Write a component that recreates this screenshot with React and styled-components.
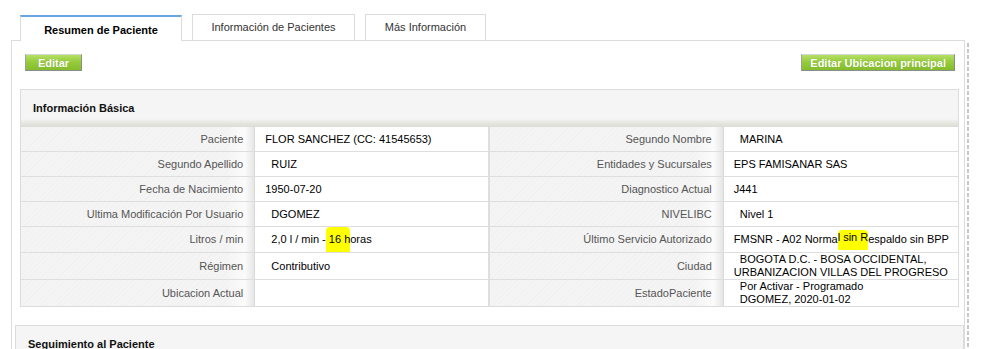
import styled, { createGlobalStyle } from "styled-components";

const GlobalStyle = createGlobalStyle`
  html, body {
    margin: 0;
    padding: 0;
    background: #fff;
  }
  body {
    font-family: "Liberation Sans", Arial, sans-serif;
    font-size: 11px;
    color: #000;
    overflow: hidden;
  }
`;

const Page = styled.div`
  padding: 14px 0 0 11px;
  display: flex;
  align-items: stretch;
`;

const Main = styled.div`
  width: 954px;
  display: flex;
  flex-direction: column;
`;

const Splitter = styled.div`
  width: 2px;
  margin: 29px 0 0 2px;
  background: repeating-linear-gradient(to bottom, #c6c6c6 0 4px, transparent 4px 6px);
`;

const Tabs = styled.div`
  display: flex;
  align-items: flex-end;
  gap: 10px;
  padding-left: 9px;
`;

const Tab = styled.div`
  position: relative;
  z-index: 1;
  box-sizing: border-box;
  width: ${(p) => p.$width}px;
  height: 26px;
  background: #fff;
  border: 1px solid #dcdcdc;
  border-bottom: none;
  text-align: center;
  line-height: 25px;
  color: #333;
  font-weight: ${(p) => (p.$active ? "bold" : "normal")};
  ${(p) =>
    p.$active &&
    `
    border-top: 2px solid #68a6e4;
    margin-bottom: -1px;
    line-height: 26px;
    color: #000;
  `}
`;

const Panel = styled.div`
  border: 1px solid #dcdcdc;
  padding: 13px 0 20px;
  min-height: 330px;
`;

const Toolbar = styled.div`
  display: flex;
  justify-content: space-between;
  padding: 0 9px 0 13px;
  margin-bottom: 18px;
`;

const Button = styled.button`
  box-sizing: border-box;
  height: 17px;
  min-width: 57px;
  padding: 0 8px;
  font-family: "Liberation Sans", Arial, sans-serif;
  font-size: 11px;
  font-weight: bold;
  color: #fff;
  text-shadow: 0 0 1px rgba(60, 100, 0, 0.35);
  background: linear-gradient(to bottom, #b4e065 0%, #97cc3d 45%, #84bd2c 100%);
  border: 1px solid;
  border-color: #d6d6d6 #8c8c8c #8c8c8c #a0a0a0;
  border-radius: 0;
  line-height: 14px;
  cursor: pointer;
`;

const Box = styled.div`
  margin: ${(p) => p.$margin};
  border: 1px solid #dcdcdc;
`;

const BoxHeader = styled.div`
  height: 37px;
  box-sizing: border-box;
  padding: 12px 0 0 12px;
  font-weight: bold;
  color: #111;
  background: linear-gradient(
    to bottom,
    #f5f5f5 0,
    #f5f5f5 29px,
    #ececE8 31px,
    #dcdcd5 37px
  );
`;

const Grid = styled.div`
  display: grid;
  grid-template-columns: 1fr 1fr 1fr 1fr;
`;

const Label = styled.div`
  display: flex;
  align-items: center;
  justify-content: flex-end;
  min-height: 24px;
  padding: 0 11px 0 8px;
  color: #555;
  line-height: 13px;
  text-align: right;
  border-bottom: ${(p) => (p.$last ? "none" : "1px solid #dedede")};
  border-right: 1px solid #d9d9d9;
  background:
    linear-gradient(to right, rgba(255, 255, 255, 0) 88%, rgba(255, 255, 255, 0.7) 96%, #e6e6e6 100%),
    repeating-linear-gradient(135deg, #f4f4f4 0 3px, #f1f1f1 3px 4px);
`;

const Value = styled.div`
  display: flex;
  align-items: center;
  min-height: 24px;
  padding: 0 8px 0 10px;
  line-height: 13px;
  background: #fff;
  white-space: pre;
  border-bottom: ${(p) => (p.$last ? "none" : "1px solid #dedede")};
  border-right: ${(p) => (p.$split ? "2px solid #dedede" : "none")};
`;

const Mark = styled.span`
  background: #ffff00;
  padding: ${(p) => p.$top}px 0 6px;
  border-radius: 4px 4px 0 0;
`;

const rows = [
  ["Paciente", "FLOR SANCHEZ (CC: 41545653)", "Segundo Nombre", "  MARINA"],
  ["Segundo Apellido", "  RUIZ", "Entidades y Sucursales", "EPS FAMISANAR SAS"],
  ["Fecha de Nacimiento", "1950-07-20", "Diagnostico Actual", "J441"],
  ["Ultima Modificación Por Usuario", "  DGOMEZ", "NIVELIBC", "  Nivel 1"],
  [
    "Litros / min",
    <>
      {"  2,0 l / min -"}
      <Mark $top={6}> 16 h</Mark>
      oras
    </>,
    "Último Servicio Autorizado",
    <>
      {"FMSNR - A02 Norma"}
      <Mark $top={1}>l sin R</Mark>
      espaldo sin BPP
    </>,
  ],
  [
    "Régimen",
    "  Contributivo",
    "Ciudad",
    <span>
      {"  BOGOTA D.C. - BOSA OCCIDENTAL,"}
      <br />
      URBANIZACION VILLAS DEL PROGRESO
    </span>,
  ],
  [
    "Ubicacion Actual",
    "",
    "EstadoPaciente",
    <span>
      {"  Por Activar - Programado"}
      <br />
      {"  DGOMEZ, 2020-01-02"}
    </span>,
  ],
];

export default function App() {
  return (
    <>
      <GlobalStyle />
      <Page>
        <Main>
          <Tabs>
            <Tab $active $width={162}>Resumen de Paciente</Tab>
            <Tab $width={163}>Información de Pacientes</Tab>
            <Tab $width={121}>Más Información</Tab>
          </Tabs>
          <Panel>
            <Toolbar>
              <Button>Editar</Button>
              <Button>Editar Ubicacion principal</Button>
            </Toolbar>
            <Box $margin="0 5px 0 8px">
              <BoxHeader>Información Básica</BoxHeader>
              <Grid>
                {rows.map(([l1, v1, l2, v2], i) => {
                  const last = i === rows.length - 1;
                  return [
                    <Label key={`a${i}`} $last={last}>{l1}</Label>,
                    <Value key={`b${i}`} $last={last} $split>{v1}</Value>,
                    <Label key={`c${i}`} $last={last}>{l2}</Label>,
                    <Value key={`d${i}`} $last={last}>{v2}</Value>,
                  ];
                })}
              </Grid>
            </Box>
            <Box $margin="18px 0 0 3px">
              <BoxHeader>Seguimiento al Paciente</BoxHeader>
            </Box>
          </Panel>
        </Main>
        <Splitter />
      </Page>
    </>
  );
}
